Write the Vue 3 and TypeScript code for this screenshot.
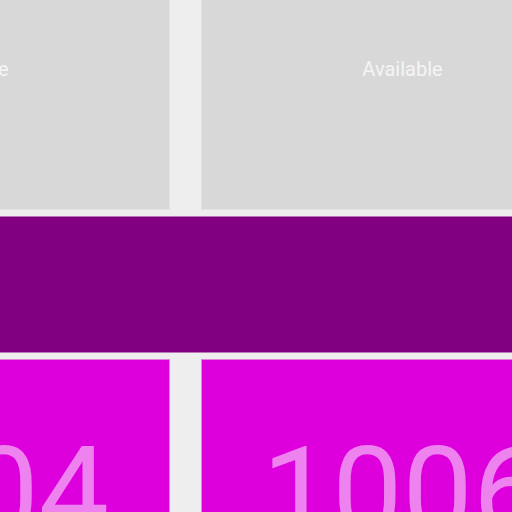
<script setup lang="ts">
interface Room {
  id: number
  number: string
}

const status = 'Available'
const upperRooms: number[] = [1, 2]
const lowerRooms: Room[] = [
  { id: 3, number: '1004' },
  { id: 4, number: '1006' },
]
</script>

<template>
  <main class="board">
    <section class="row">
      <article v-for="id in upperRooms" :key="id" class="card free">
        <p class="status">{{ status }}</p>
      </article>
    </section>
    <div class="band"></div>
    <section class="row">
      <article v-for="room in lowerRooms" :key="room.id" class="card taken">
        <h2 class="number">{{ room.number }}</h2>
      </article>
    </section>
  </main>
</template>

<style>
body {
  margin: 0;
  background: #eeeeee;
}
</style>

<style scoped>
.board {
  display: flex;
  flex-direction: column;
  gap: 6px;
  height: 100vh;
  overflow: hidden;
  background: #eeeeee;
  font-family: Roboto, sans-serif;
}

.row {
  display: flex;
  flex: none;
  gap: 31px;
  margin-left: -233px;
}

.card {
  box-sizing: border-box;
  flex: none;
  width: 403px;
  text-align: center;
}

.free {
  padding: 57px 0 127px;
  border: 1px solid #e3e3e3;
  border-top: 0;
  background: #d8d8d8;
  color: #f5f5f5;
}

.status {
  margin: 0;
  font-size: 20px;
  line-height: 25px;
}

.band {
  box-sizing: border-box;
  flex: none;
  height: 137px;
  border: solid #b877b8;
  border-width: 1px 0;
  background: #800080;
}

.taken {
  padding: 60px 0;
  border: 1px solid #e080e0;
  background: #dd00dd;
  color: #ee82ee;
}

.number {
  margin: 0;
  font-size: 125px;
  font-weight: 400;
  line-height: 146px;
}
</style>
